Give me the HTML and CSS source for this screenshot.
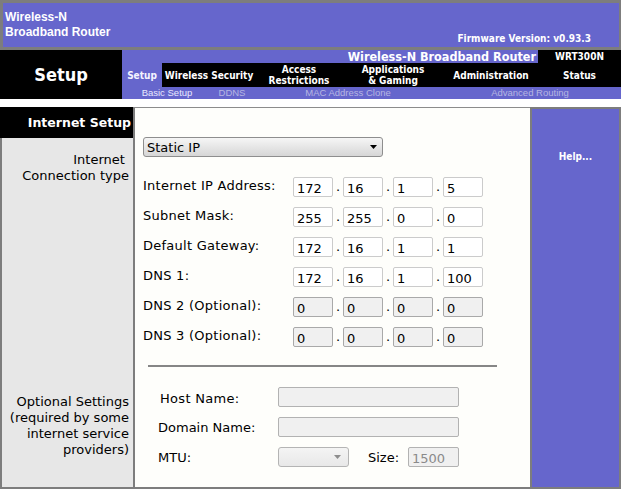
FILE: index.html
```html
<!DOCTYPE html>
<html lang="en">
<head>
<meta charset="utf-8">
<title>Setup - Basic Setup</title>
<link rel="stylesheet" href="styles.css">
</head>
<body>
<header class="banner">
  <div class="brand">Wireless-N<br>Broadband Router</div>
  <div class="firmware">Firmware Version: v0.93.3</div>
</header>

<nav class="navband">
  <div class="section-name">Setup</div>
  <div class="navmain">
    <div class="row-product">
      <div class="product">Wireless-N Broadband Router</div>
      <div class="model">WRT300N</div>
    </div>
    <div class="tabs">
      <div class="tab current">Setup</div>
      <div class="tab">Wireless Security</div>
      <div class="tab">Access<br>Restrictions</div>
      <div class="tab">Applications<br>&amp; Gaming</div>
      <div class="tab">Administration</div>
      <div class="tab">Status</div>
    </div>
    <div class="subtabs">
      <div class="subtab current">Basic Setup</div>
      <div class="subtab">DDNS</div>
      <div class="subtab">MAC Address Clone</div>
      <div class="subtab">Advanced Routing</div>
    </div>
  </div>
</nav>

<div class="content">
  <aside class="side">
    <div class="side-head">Internet Setup</div>
    <div class="side-body">
      <div class="side-label first">Internet&nbsp;<br>Connection type</div>
      <div class="side-label second">Optional Settings<br>(required by some<br>internet service<br>providers)</div>
    </div>
  </aside>

  <main class="main">
    <div class="select wide">
      <span>Static IP</span>
      <svg class="arrow" width="7" height="4" viewBox="0 0 7 4"><polygon points="0,0 7,0 3.5,4" fill="#000"/></svg>
    </div>

    <div class="ip-rows">
      <div class="ip-row">
        <div class="ip-label">Internet IP Address:</div>
        <input class="octet" value="172"><span class="dot">.</span><input class="octet" value="16"><span class="dot">.</span><input class="octet" value="1"><span class="dot">.</span><input class="octet" value="5">
      </div>
      <div class="ip-row">
        <div class="ip-label">Subnet Mask:</div>
        <input class="octet" value="255"><span class="dot">.</span><input class="octet" value="255"><span class="dot">.</span><input class="octet" value="0"><span class="dot">.</span><input class="octet" value="0">
      </div>
      <div class="ip-row">
        <div class="ip-label">Default Gateway:</div>
        <input class="octet" value="172"><span class="dot">.</span><input class="octet" value="16"><span class="dot">.</span><input class="octet" value="1"><span class="dot">.</span><input class="octet" value="1">
      </div>
      <div class="ip-row">
        <div class="ip-label">DNS 1:</div>
        <input class="octet" value="172"><span class="dot">.</span><input class="octet" value="16"><span class="dot">.</span><input class="octet" value="1"><span class="dot">.</span><input class="octet" value="100">
      </div>
      <div class="ip-row">
        <div class="ip-label">DNS 2 (Optional):</div>
        <input class="octet grey" value="0"><span class="dot">.</span><input class="octet grey" value="0"><span class="dot">.</span><input class="octet grey" value="0"><span class="dot">.</span><input class="octet grey" value="0">
      </div>
      <div class="ip-row">
        <div class="ip-label">DNS 3 (Optional):</div>
        <input class="octet grey" value="0"><span class="dot">.</span><input class="octet grey" value="0"><span class="dot">.</span><input class="octet grey" value="0"><span class="dot">.</span><input class="octet grey" value="0">
      </div>
    </div>

    <div class="divider"></div>

    <div class="opt-rows">
      <div class="opt-row">
        <div class="opt-label host">Host Name:</div>
        <input class="text-wide" value="">
      </div>
      <div class="opt-row">
        <div class="opt-label">Domain Name:</div>
        <input class="text-wide" value="">
      </div>
      <div class="opt-row">
        <div class="opt-label">MTU:</div>
        <div class="select mtu">
          <span></span>
          <svg class="arrow" width="7" height="4" viewBox="0 0 7 4"><polygon points="0,0 7,0 3.5,4" fill="#8d8d8d"/></svg>
        </div>
        <div class="size-label">Size:</div>
        <input class="size-input" value="1500">
      </div>
    </div>
  </main>

  <aside class="help">Help...</aside>
</div>
</body>
</html>
```

FILE: styles.css
```css
* {
  box-sizing: border-box;
}

html, body {
  margin: 0;
  padding: 0;
  background: #ffffff;
}

body {
  width: 621px;
  height: 489px;
  overflow: hidden;
  font-family: "DejaVu Sans", Verdana, sans-serif;
  color: #000;
}

/* ---------- top banner ---------- */
.banner {
  display: flex;
  justify-content: space-between;
  height: 50px;
  background: #6666cc;
  border-style: solid;
  border-color: #7d7d7d;
  border-width: 3px 2px 3px 3px;
  color: #fff;
}

.brand {
  font: bold 12px/15px "Liberation Sans", Arial, sans-serif;
  padding: 7px 0 0 2px;
}

.firmware {
  align-self: flex-end;
  margin: 0 28px 2px 0;
  font: bold 10px/12px "DejaVu Sans Condensed", "DejaVu Sans", sans-serif;
  font-stretch: condensed;
}

/* ---------- navigation band ---------- */
.navband {
  display: flex;
  height: 49px;
}

.section-name {
  width: 122px;
  background: #000;
  color: #fff;
  display: flex;
  align-items: center;
  justify-content: center;
  font: bold 18px "DejaVu Sans Condensed", "DejaVu Sans", sans-serif;
  font-stretch: condensed;
}

.navmain {
  flex: 1;
  display: flex;
  flex-direction: column;
  background: #6666cc;
}

.row-product {
  display: grid;
  grid-template-columns: 1fr 83px;
  height: 13px;
}

.product {
  text-align: right;
  padding-right: 2px;
  color: #fff;
  font: bold 12.5px/13px "DejaVu Sans Condensed", "DejaVu Sans", sans-serif;
  font-stretch: condensed;
  white-space: nowrap;
}

.model {
  background: #000;
  color: #fff;
  text-align: center;
  font: bold 10px/13px "DejaVu Sans Condensed", "DejaVu Sans", sans-serif;
  font-stretch: condensed;
}

.tabs {
  display: grid;
  grid-template-columns: 40px 94px 86px 102px 94px 83px;
  height: 24px;
  background: #000;
}

.tab {
  display: flex;
  align-items: center;
  justify-content: center;
  text-align: center;
  color: #fff;
  font: bold 10px/11px "DejaVu Sans Condensed", "DejaVu Sans", sans-serif;
  font-stretch: condensed;
  white-space: nowrap;
}

.tab.current {
  background: #6666cc;
  color: #f4f4ff;
}

.subtabs {
  display: grid;
  grid-template-columns: 90px 40px 192px 172px;
  height: 12px;
  font: 9.5px/12px "Liberation Sans", Arial, sans-serif;
  color: #b6b6e2;
}

.subtab {
  text-align: center;
  white-space: nowrap;
}

.subtab.current {
  color: #e8e8ff;
}

/* ---------- content ---------- */
.content {
  display: grid;
  grid-template-columns: 133px 397px 89px;
  height: 382px;
  margin-top: 8px;
  border-right: 2px solid #7d7d7d;
  border-bottom: 2px solid #7d7d7d;
}

.side {
  display: flex;
  flex-direction: column;
}

.side-head {
  height: 31px;
  background: #000;
  color: #fff;
  text-align: right;
  padding-right: 2px;
  font: bold 12.5px/31px "DejaVu Sans", Verdana, sans-serif;
  white-space: nowrap;
}

.side-body {
  flex: 1;
  background: #e7e7e7;
  border-left: 2px solid #7d7d7d;
  padding: 14px 4px 0 0;
  text-align: right;
  font-size: 13px;
  line-height: 16px;
}

.side-label.second {
  margin-top: 210px;
}

.main {
  background: #fefefb;
  border-left: 2px solid #7d7d7d;
  border-top: 1px solid #8c8c8c;
  padding: 29px 0 0 8px;
  font-size: 13px;
}

.select {
  display: flex;
  align-items: center;
  justify-content: space-between;
  height: 20px;
  border: 1px solid #8e8e8e;
  border-radius: 3px;
  background: linear-gradient(#f6f6f6, #d6d6d6);
  font-size: 13px;
}

.select.wide {
  width: 240px;
  padding: 0 5px 0 3px;
}

.select.mtu {
  width: 71px;
  padding: 0 7px 0 3px;
  border-color: #b4b4b4;
  background: linear-gradient(#f4f4f4, #e8e8e8);
}

.arrow {
  display: block;
}

.ip-rows {
  margin-top: 20px;
  display: flex;
  flex-direction: column;
  gap: 10px;
}

.ip-row {
  display: flex;
  height: 20px;
}

.ip-label {
  width: 150px;
  line-height: 16px;
  padding-top: 0.5px;
  letter-spacing: 0.25px;
  white-space: nowrap;
}

.octet {
  width: 40px;
  height: 20px;
  margin: 0;
  border: 1px solid #cbcbcb;
  border-radius: 2px;
  padding: 3px 0 0 3px;
  background: #fff;
  font: 13px "DejaVu Sans", Verdana, sans-serif;
  color: #000;
  outline: none;
}

.octet.grey {
  background: #f0f0f0;
  border-color: #a9a9a9;
}

.dot {
  width: 10px;
  text-align: center;
  line-height: 20px;
}

.divider {
  margin: 18px 0 0 5px;
  width: 349px;
  height: 2px;
  background: #868686;
}

.opt-rows {
  margin-top: 20px;
  display: flex;
  flex-direction: column;
  gap: 10px;
}

.opt-row {
  display: flex;
  align-items: flex-start;
  height: 20px;
}

.opt-label {
  width: 135px;
  padding: 3px 0 0 15px;
  line-height: 16px;
  white-space: nowrap;
}

.opt-label.host {
  padding: 4px 0 0 17px;
  letter-spacing: 0.3px;
}

.text-wide {
  width: 181px;
  height: 20px;
  margin: 0;
  border: 1px solid #b2b2b2;
  border-radius: 2px;
  background: #f0f0f0;
  padding: 0 3px;
  outline: none;
}

.size-label {
  width: 40px;
  margin-left: 19px;
  padding-top: 3px;
  line-height: 16px;
}

.size-input {
  width: 51px;
  height: 20px;
  margin: 0;
  border: 1px solid #b2b2b2;
  border-radius: 2px;
  background: #f0f0f0;
  padding: 3px 0 0 3px;
  font: 13px "DejaVu Sans", Verdana, sans-serif;
  color: #8a8a8a;
  outline: none;
}

.help {
  background: #6666cc;
  border-left: 2px solid #7d7d7d;
  border-top: 2px solid #7d7d7d;
  padding-top: 42px;
  text-align: center;
  color: #fff;
  font: bold 10px/12px "DejaVu Sans Condensed", "DejaVu Sans", sans-serif;
  font-stretch: condensed;
}
```
